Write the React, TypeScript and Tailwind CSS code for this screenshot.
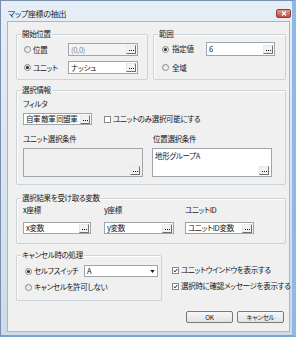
import React from 'react';

const jp = "font-['Noto_Sans_CJK_JP',sans-serif] [font-feature-settings:'palt']";

function Dots() {
  return (
    <span className="flex h-[9px] w-[10px] shrink-0 items-end justify-center gap-[1px] border border-t-[#e8e8e8] border-l-[#e8e8e8] border-r-[#6f6f6f] border-b-[#6f6f6f] bg-[#f2f2f2] pb-[2px]">
      <span className="h-[1px] w-[1px] bg-[#111]" />
      <span className="h-[1px] w-[1px] bg-[#111]" />
      <span className="h-[1px] w-[1px] bg-[#111]" />
    </span>
  );
}

function Field({ value, className, muted }: { value: string; className: string; muted?: boolean }) {
  return (
    <div
      className={`flex shrink-0 items-center border border-[#a0a5ac] pl-[2px] pr-[1px] ${
        muted ? 'bg-[#f4f4f4] text-[#8a8a8a]' : 'bg-white text-[#161616]'
      } ${className}`}
    >
      <span className="flex-1 overflow-hidden whitespace-nowrap text-[7.5px] leading-[10px]">{value}</span>
      <Dots />
    </div>
  );
}

function Area({ value, muted }: { value: string; muted?: boolean }) {
  return (
    <div
      className={`flex h-[29px] w-[120px] flex-col border border-[#a0a5ac] px-[2px] pt-[2px] pb-[1px] ${
        muted ? 'bg-[#f0f0f0]' : 'bg-white'
      }`}
    >
      <span className="flex-1 text-[7.5px] leading-[10px] text-[#161616]">{value}</span>
      <div className="flex justify-end">
        <Dots />
      </div>
    </div>
  );
}

function Radio({ on }: { on?: boolean }) {
  return (
    <span className="flex h-[7px] w-[7px] shrink-0 items-center justify-center rounded-full border border-[#8a8a8a] bg-gradient-to-br from-[#d8d8d8] to-white">
      {on && <span className="h-[3px] w-[3px] rounded-full bg-[#262626]" />}
    </span>
  );
}

function Check({ on }: { on?: boolean }) {
  return (
    <span className="flex h-[7px] w-[7px] shrink-0 items-center justify-center border border-[#8a8a8a] bg-white">
      {on && (
        <svg viewBox="0 0 7 7" className="h-[5px] w-[5px]">
          <path d="M1 3.6 L2.8 5.4 L6 1.4" fill="none" stroke="#1f1f1f" strokeWidth="1.4" />
        </svg>
      )}
    </span>
  );
}

function Group({ title, className, children }: { title: string; className: string; children: React.ReactNode }) {
  return (
    <div className={`relative shrink-0 rounded-[2px] border border-[#cbd2d8] shadow-[inset_1px_1px_0_#fff] ${className}`}>
      <span className="absolute left-[4px] top-[-6px] bg-[#f0f0f0] px-[1px] leading-[10px] text-[#161616]">
        {title}
      </span>
      {children}
    </div>
  );
}

function Btn({ label }: { label: string }) {
  return (
    <div className="flex h-[12px] w-[47px] items-center justify-center rounded-[2px] border border-[#7a7a7a] bg-gradient-to-b from-[#f8f8f8] to-[#e2e2e2] text-[6.5px] leading-none text-[#161616]">
      {label}
    </div>
  );
}

export default function App() {
  return (
    <div className={`h-[340px] w-[300px] bg-white whitespace-nowrap tracking-[-0.3px] ${jp}`}>
      <div className="flex h-[337px] w-[296px] flex-col border border-[#7890ad] border-r-[4px] border-r-[#8db9e4] border-b-[2px] border-b-[#78a4d4] bg-gradient-to-b from-[#e6eef7] to-[#cddbea]">
        <div className="flex h-[20px] shrink-0 items-start pl-[7px] pt-[8px] pr-[1px]">
          <span className="text-[8px] leading-[10px] text-[#1a1a1a]">マップ座標の抽出</span>
          <div className="ml-auto flex h-[9px] w-[15px] items-center justify-center rounded-[2px] border border-[#8e3f36] bg-gradient-to-b from-[#e39a8c] to-[#c44b3e]">
            <svg viewBox="0 0 6 5" className="h-[5px] w-[6px]">
              <path d="M1 0.5 L5 4.5 M5 0.5 L1 4.5" stroke="#fff" strokeWidth="1.3" />
            </svg>
          </div>
        </div>

        <div className="mb-[3px] ml-[6px] mr-[2px] flex flex-1 flex-col border border-[#a6b7c9] bg-[#f0f0f0] pl-[8px] pt-[12px] text-[7.5px] leading-[10px] text-[#161616]">
          <div className="flex gap-[5px]">
            <Group title="開始位置" className="h-[46px] w-[132px]">
              <div className="flex flex-col gap-[5px] pl-[7px] pr-[9px] pt-[8px]">
                <div className="flex h-[13px] items-center">
                  <Radio />
                  <span className="ml-[2px]">位置</span>
                  <Field value="(0,0)" muted className="ml-auto h-[13px] w-[70px]" />
                </div>
                <div className="flex h-[13px] items-center">
                  <Radio on />
                  <span className="ml-[2px]">ユニット</span>
                  <Field value="ナッシュ" className="ml-auto h-[13px] w-[70px]" />
                </div>
              </div>
            </Group>
            <Group title="範囲" className="h-[46px] w-[133px]">
              <div className="flex flex-col gap-[5px] pl-[8px] pr-[10px] pt-[7px]">
                <div className="flex h-[14px] items-center">
                  <Radio on />
                  <span className="ml-[3px]">指定値</span>
                  <Field value="6" className="ml-auto h-[14px] w-[69px]" />
                </div>
                <div className="flex h-[13px] items-center">
                  <Radio />
                  <span className="ml-[3px]">全域</span>
                </div>
              </div>
            </Group>
          </div>

          <Group title="選択情報" className="mt-[10px] h-[95px] w-[270px]">
            <div className="flex flex-col pl-[6px] pt-[8px]">
              <span className="h-[10px]">フィルタ</span>
              <div className="mt-[4px] flex h-[12px] items-center">
                <Field value="自軍 敵軍 同盟軍" className="h-[12px] w-[69px] tracking-[-0.5px]" />
                <span className="ml-[12px]">
                  <Check />
                </span>
                <span className="ml-[2px]">ユニットのみ選択可能にする</span>
              </div>
              <div className="mt-[9px] flex h-[10px] gap-[9px]">
                <span className="w-[120px]">ユニット選択条件</span>
                <span className="w-[120px] pl-[1px]">位置選択条件</span>
              </div>
              <div className="mt-[4px] flex gap-[9px]">
                <Area value="" muted />
                <Area value="地形グループA" />
              </div>
            </div>
          </Group>

          <Group title="選択結果を受け取る変数" className="mt-[13px] h-[46px] w-[270px]">
            <div className="flex pl-[6px] pt-[6px]">
              <div className="flex w-[81px] flex-col">
                <span className="h-[10px]">x座標</span>
                <Field value="x変数" className="mt-[7px] h-[12px] w-[68px]" />
              </div>
              <div className="flex w-[81px] flex-col">
                <span className="h-[10px]">y座標</span>
                <Field value="y変数" className="mt-[7px] h-[12px] w-[70px]" />
              </div>
              <div className="flex w-[81px] flex-col">
                <span className="h-[10px]">ユニットID</span>
                <Field value="ユニットID変数" className="mt-[7px] h-[12px] w-[69px]" />
              </div>
            </div>
          </Group>

          <div className="mt-[11px] flex">
            <Group title="キャンセル時の処理" className="h-[46px] w-[146px]">
              <div className="flex flex-col pl-[8px] pr-[3px] pt-[9px]">
                <div className="flex h-[12px] items-center">
                  <Radio on />
                  <span className="ml-[2px]">セルフスイッチ</span>
                  <div className="ml-auto flex h-[12px] w-[74px] items-center border border-[#a0a5ac] bg-white pl-[2px] pr-[2px]">
                    <span className="flex-1 leading-[10px]">A</span>
                    <svg viewBox="0 0 6 4" className="h-[3px] w-[5px]">
                      <path d="M0 0 L6 0 L3 4 Z" fill="#1a1a1a" />
                    </svg>
                  </div>
                </div>
                <div className="mt-[4px] flex h-[12px] items-center">
                  <Radio />
                  <span className="ml-[2px]">キャンセルを許可しない</span>
                </div>
              </div>
            </Group>
            <div className="ml-[10px] flex flex-col pt-[9px]">
              <div className="flex h-[12px] items-center">
                <Check on />
                <span className="ml-[2px]">ユニットウインドウを表示する</span>
              </div>
              <div className="mt-[4px] flex h-[12px] items-center">
                <Check on />
                <span className="ml-[2px]">選択時に確認メッセージを表示する</span>
              </div>
            </div>
          </div>

          <div className="mt-[10px] flex justify-end gap-[4px] pr-[5px]">
            <Btn label="OK" />
            <Btn label="キャンセル" />
          </div>
        </div>
      </div>
    </div>
  );
}
